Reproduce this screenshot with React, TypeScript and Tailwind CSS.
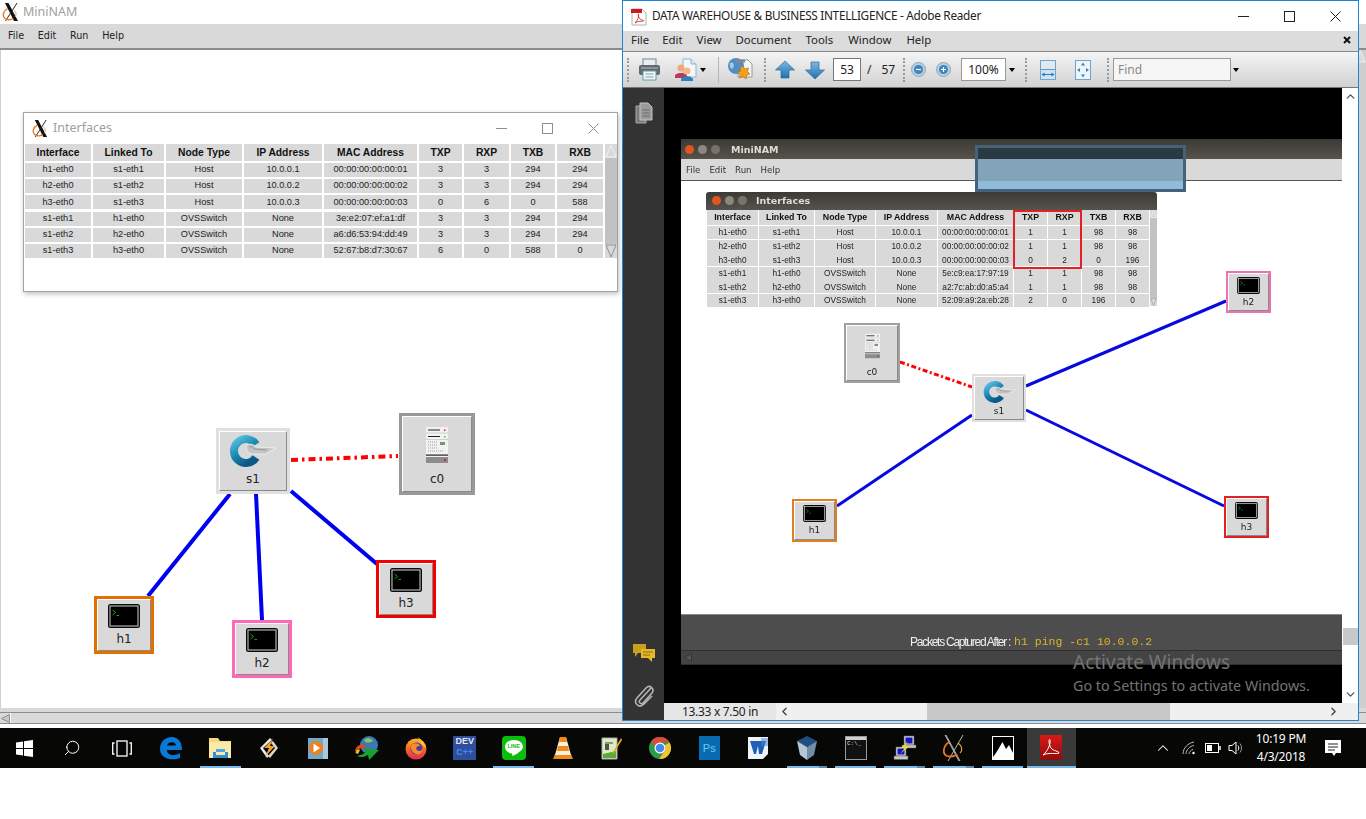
import type { ReactNode } from "react";
import { ChevronDown, ChevronLeft, ChevronRight, ChevronUp, Search } from "lucide-react";

const SANS = "font-['Liberation_Sans',Arial,sans-serif]";
const UI = "font-['Noto_Sans',sans-serif]";
const DEJAVU = "font-['DejaVu_Sans',sans-serif]";

const headers = ["Interface", "Linked To", "Node Type", "IP Address", "MAC Address", "TXP", "RXP", "TXB", "RXB"];

const liveRows = [
  ["h1-eth0", "s1-eth1", "Host", "10.0.0.1", "00:00:00:00:00:01", "3", "3", "294", "294"],
  ["h2-eth0", "s1-eth2", "Host", "10.0.0.2", "00:00:00:00:00:02", "3", "3", "294", "294"],
  ["h3-eth0", "s1-eth3", "Host", "10.0.0.3", "00:00:00:00:00:03", "0", "6", "0", "588"],
  ["s1-eth1", "h1-eth0", "OVSSwitch", "None", "3e:e2:07:ef:a1:df", "3", "3", "294", "294"],
  ["s1-eth2", "h2-eth0", "OVSSwitch", "None", "a6:d6:53:94:dd:49", "3", "3", "294", "294"],
  ["s1-eth3", "h3-eth0", "OVSSwitch", "None", "52:67:b8:d7:30:67", "6", "0", "588", "0"],
];

const docRows = [
  ["h1-eth0", "s1-eth1", "Host", "10.0.0.1", "00:00:00:00:00:01", "1", "1", "98", "98"],
  ["h2-eth0", "s1-eth2", "Host", "10.0.0.2", "00:00:00:00:00:02", "1", "1", "98", "98"],
  ["h3-eth0", "s1-eth3", "Host", "10.0.0.3", "00:00:00:00:00:03", "0", "2", "0", "196"],
  ["s1-eth1", "h1-eth0", "OVSSwitch", "None", "5e:c9:ea:17:97:19", "1", "1", "98", "98"],
  ["s1-eth2", "h2-eth0", "OVSSwitch", "None", "a2:7c:ab:d0:a5:a4", "1", "1", "98", "98"],
  ["s1-eth3", "h3-eth0", "OVSSwitch", "None", "52:09:a9:2a:eb:28", "2", "0", "196", "0"],
];

function XLogo({ className }: { className?: string }) {
  return (
    <svg viewBox="0 0 18 20" className={className}>
      <path d="M3 1 L6.5 1 L16 19 L12 19 Z" fill="#111" />
      <path d="M14.5 1 L15.5 1 L4 19 L3 19 Z" fill="#222" />
      <path d="M5.5 6.5 C1 9 0 14 3 16.5 C6 18.5 10 18 11 16" fill="none" stroke="#e8761e" strokeWidth="1.4" />
      <path d="M12 8 C14.5 10 14.5 13 13 15" fill="none" stroke="#e8a060" strokeWidth="1" />
    </svg>
  );
}

function WinControls({ inactive }: { inactive?: boolean }) {
  const stroke = inactive ? "#8f8f8f" : "#222";
  return (
    <div className="flex items-center">
      <svg width="11" height="11" viewBox="0 0 11 11" className="mr-[35px]"><path d="M0 5.5H11" stroke={stroke} /></svg>
      <svg width="11" height="11" viewBox="0 0 11 11" className="mr-[35px]"><rect x="0.5" y="0.5" width="10" height="10" fill="none" stroke={stroke} /></svg>
      <svg width="11" height="11" viewBox="0 0 11 11"><path d="M0.5 0.5L10.5 10.5M10.5 0.5L0.5 10.5" stroke={stroke} /></svg>
    </div>
  );
}

function Terminal({ className }: { className?: string }) {
  return (
    <svg viewBox="0 0 32 24" className={className}>
      <rect width="32" height="24" rx="2.5" fill="#0a0a0a" />
      <rect x="2" y="2" width="28" height="20" fill="#000" stroke="#e8e8e8" strokeWidth="0.9" />
      <path d="M4.5 6 L7.5 8.5 L4.5 11 M8.5 11.5 H11" fill="none" stroke="#0fbf0f" strokeWidth="0.9" />
    </svg>
  );
}

function SwitchIcon({ className }: { className?: string }) {
  return (
    <svg viewBox="0 0 48 34" className={className}>
      <defs>
        <linearGradient id="ring" x1="0" y1="0" x2="0.6" y2="1">
          <stop offset="0" stopColor="#5cc0e0" />
          <stop offset="0.55" stopColor="#1a86b4" />
          <stop offset="1" stopColor="#0b5a86" />
        </linearGradient>
      </defs>
      <path d="M27 10.500 A12 12 0 1 0 27 23.500" fill="none" stroke="url(#ring)" strokeWidth="8" />
      <path d="M17 12 C20 9 25 10 27 13 L47 14 L36 20 L24 20 C20 20 17 16 17 12Z" fill="#c4c4c4" stroke="#f4f4f4" strokeWidth="0.8" />
      <path d="M20 13 C22 12 24 13 25 15 L38 16" fill="none" stroke="#8d8d8d" strokeWidth="0.8" />
    </svg>
  );
}

function ServerIcon({ className }: { className?: string }) {
  return (
    <svg viewBox="0 0 22 36" className={className}>
      <rect width="22" height="36" fill="#f2f2f2" />
      <path d="M2 3H14M2 9.500H14" stroke="#222" strokeWidth="1.2" />
      <rect x="18" y="2.500" width="1.500" height="1.500" fill="#d22" />
      <rect x="18" y="9" width="1.500" height="1.500" fill="#5b5" />
      <path d="M0 6H22M0 12.500H22" stroke="#bbb" strokeWidth="0.6" />
      <path d="M2 15H11M2 18H11M2 21H11M2 24H18" stroke="#9a9a9a" strokeWidth="1" strokeDasharray="1 1" />
      <rect x="14" y="15" width="5" height="3" fill="#6f9a6f" />
      <rect y="27.500" width="22" height="1.200" fill="#222" />
      <rect y="30" width="22" height="6" fill="#8c8c8c" />
      <rect x="18" y="32" width="2" height="2" fill="#b33" />
    </svg>
  );
}

function NetNode({ className, label, labelClass, children }: { className: string; label: string; labelClass: string; children: ReactNode }) {
  return (
    <div className={`absolute flex border-solid ${className}`}>
      <div className="flex flex-1 flex-col items-center border border-t-white border-l-white border-r-[#8a8a8a] border-b-[#8a8a8a] bg-[#d9d9d9]">
        {children}
        <span className={`${DEJAVU} text-[#222] ${labelClass}`}>{label}</span>
      </div>
    </div>
  );
}

function InterfaceGrid({ rows, grid, head, cell, headCell, rowCell }: { rows: string[][]; grid: string; head: string; cell: string; headCell: string; rowCell: string }) {
  return (
    <div className={`grid ${grid} ${SANS}`}>
      {headers.map((h) => (
        <div key={h} className={`flex items-center justify-center bg-[#d9d9d9] font-bold text-[#111] ${headCell} ${head}`}>
          {h}
        </div>
      ))}
      {rows.map((row) =>
        row.map((v, i) => (
          <div key={row[0] + i} className={`flex items-center justify-center bg-[#d9d9d9] text-[#222] ${rowCell} ${cell}`}>
            {v}
          </div>
        ))
      )}
    </div>
  );
}

function TableScroll({ className }: { className: string }) {
  return (
    <div className={`flex flex-col justify-between bg-[#c2c2c2] ${className}`}>
      <svg viewBox="0 0 12 14" className="w-full">
        <rect width="12" height="14" fill="#d9d9d9" />
        <path d="M6 1 L11 13 H1 Z" fill="#d9d9d9" stroke="#f2f2f2" />
      </svg>
      <svg viewBox="0 0 12 14" className="w-full">
        <rect width="12" height="14" fill="#d9d9d9" />
        <path d="M6 13 L11 1 H1 Z" fill="#d9d9d9" stroke="#8f8f8f" />
      </svg>
    </div>
  );
}

function MiniNamWindow() {
  return (
    <div className="absolute left-0 top-0 flex h-[728px] w-[1366px] flex-col bg-white">
      <div className="flex h-6 items-center pl-[2px]">
        <XLogo className="h-[20px] w-[18px]" />
        <span className={`ml-[3px] text-[12.5px] text-[#a0a0a0] ${UI}`}>MiniNAM</span>
      </div>
      <div className={`flex h-[26px] items-center gap-[13.7px] border-b-2 border-[#8c8c8c] bg-[#d9d9d9] pl-2 text-[9.6px] text-[#222] ${DEJAVU}`}>
        <span>File</span>
        <span>Edit</span>
        <span>Run</span>
        <span>Help</span>
      </div>
      <div className="flex flex-1">
        <div className="relative flex-1 border-l border-[#d0d0d0]">
          <svg className="absolute left-0 top-0" width="500" height="658" viewBox="0 50 500 658">
            <g stroke="#0000f0" strokeWidth="4">
              <path d="M229 494 L147 596" />
              <path d="M255 494 L261 620" />
              <path d="M290 491 L376 564" />
            </g>
            <path d="M290 460 L397 456" stroke="#f00" strokeWidth="4" strokeDasharray="7 4 2.500 4" fill="none" />
          </svg>

          <div className="absolute left-[22px] top-[62px] flex h-[180px] w-[595px] flex-col border border-[#a3a3a3] bg-white shadow-[1px_2px_5px_rgba(0,0,0,0.25)]">
            <div className="flex h-[30px] items-center pl-2 pr-[18px]">
              <XLogo className="h-[19px] w-[17px]" />
              <span className={`ml-[4px] mt-px text-[12.5px] text-[#a0a0a0] ${UI}`}>Interfaces</span>
              <div className="ml-auto">
                <WinControls inactive />
              </div>
            </div>
            <div className="ml-px mt-px flex">
              <InterfaceGrid
                rows={liveRows}
                grid="grid-cols-[66px_71px_76px_78px_93px_43px_45px_44px_46px] gap-[2px]"
                head="h-[17px]"
                cell="h-[14px]"
                headCell="text-[10.3px]"
                rowCell="text-[9.2px]"
              />
              <TableScroll className="ml-[2px] h-[114px] w-[12px]" />
            </div>
          </div>

          <NetNode className="left-[215px] top-[378px] h-[66px] w-[74px] border-[3px] border-[#e0e0e0]" label="s1" labelClass="text-[12px] leading-none mt-[5px]">
            <SwitchIcon className="mt-[2px] h-[34px] w-[48px]" />
          </NetNode>
          <NetNode className="left-[398px] top-[363px] h-[82px] w-[76px] border-[3px] border-[#999999]" label="c0" labelClass="text-[12px] leading-none mt-[10px]">
            <ServerIcon className="mt-[10px] h-[36px] w-[22px]" />
          </NetNode>
          <NetNode className="left-[93px] top-[546px] h-[58px] w-[60px] border-[3px] border-[#e07000]" label="h1" labelClass="text-[12px] leading-none mt-[5px]">
            <Terminal className="mt-[4px] h-[24px] w-[32px]" />
          </NetNode>
          <NetNode className="left-[231px] top-[570px] h-[58px] w-[60px] border-[3px] border-[#ff69b4]" label="h2" labelClass="text-[12px] leading-none mt-[5px]">
            <Terminal className="mt-[4px] h-[24px] w-[32px]" />
          </NetNode>
          <NetNode className="left-[375px] top-[510px] h-[58px] w-[60px] border-[3px] border-[#f40000]" label="h3" labelClass="text-[12px] leading-none mt-[5px]">
            <Terminal className="mt-[4px] h-[24px] w-[32px]" />
          </NetNode>
        </div>
        <div className="flex w-[12px] flex-col border-l border-[#aaa] bg-[#cfcfcf]">
          <svg viewBox="0 0 12 14" className="w-full">
            <path d="M6 1 L11 13 H1 Z" fill="#d9d9d9" stroke="#f2f2f2" />
          </svg>
        </div>
      </div>
      <div className="h-1 bg-[#d9d9d9]" />
      <div className="flex h-3 border-y border-[#8c8c8c] bg-[#d9d9d9]">
        <div className="flex w-[11px] items-center justify-center border-r border-white">
          <svg width="9" height="9" viewBox="0 0 9 9"><path d="M0.5 4.5 L8.500 0.500 V8.500 Z" fill="#c8c8c8" stroke="#8f8f8f" /></svg>
        </div>
      </div>
      <div className="h-1" />
    </div>
  );
}

function Grip() {
  return <div className="h-[24px] w-[2px] border-l-2 border-dotted border-[#999]" />;
}

function Caret() {
  return <div className="h-0 w-0 border-x-[3px] border-t-[4px] border-x-transparent border-t-black" />;
}

function PrinterIcon() {
  return (
    <svg viewBox="0 0 23 23" className="ml-[9px] h-[23px] w-[23px]">
      <rect x="5" y="1" width="13" height="7" fill="#e8eef2" stroke="#6d8c9c" />
      <rect x="1" y="7" width="21" height="10" rx="2" fill="#62696f" />
      <rect x="3" y="9" width="17" height="2" fill="#8d9499" />
      <rect x="5" y="13" width="13" height="9" fill="#f3f6f7" stroke="#58a0b0" />
      <path d="M7.500 16H15.500M7.500 19H15.500" stroke="#8f9aa0" />
    </svg>
  );
}

function ShareIcon() {
  return (
    <svg viewBox="0 0 23 24" className="ml-[13px] h-[24px] w-[23px]">
      <path d="M9 1H17L22 6V19H9Z" fill="#f4f8fb" stroke="#8fb4cc" />
      <path d="M17 1V6H22" fill="#dce8f0" stroke="#8fb4cc" />
      <circle cx="7" cy="10" r="3.500" fill="#f0a878" />
      <path d="M1 18C1 14 13 14 13 18V20H1Z" fill="#b83a5a" />
      <circle cx="13" cy="13" r="3.500" fill="#f4b888" />
      <path d="M7 22C7 17 19 17 19 22V23H7Z" fill="#2f80b8" />
    </svg>
  );
}

function GlobeIcon() {
  return (
    <svg viewBox="0 0 26 26" className="ml-[8px] h-[26px] w-[26px]">
      <path d="M11 3H21L25 7V20H11Z" fill="#f5f5f5" stroke="#9a9a9a" />
      <circle cx="9" cy="9" r="8" fill="#4f8fc4" />
      <path d="M3 6C6 4 8 8 6 11C4 13 2 10 3 6Z" fill="#a9cbe4" />
      <rect x="8" y="2.500" width="10" height="3" fill="#888" />
      <path d="M16 9L18 12L21.500 11L20.500 14.500L23 17L20 18L19 22L16 19.500L12.500 21L13 17.500L10 15.500L13.500 14L13 10.500Z" fill="#f0a020" stroke="#a86a10" strokeWidth="0.6" />
    </svg>
  );
}

function ArrowIcon({ down, className }: { down?: boolean; className: string }) {
  return (
    <svg viewBox="0 0 20 20" className={className}>
      <defs>
        <linearGradient id="arrowBlue" x1="0" y1="0" x2="0" y2="1">
          <stop offset="0" stopColor="#7cb8e4" />
          <stop offset="1" stopColor="#1f70b0" />
        </linearGradient>
      </defs>
      <path
        d={down ? "M6 2H14V10H19.500L10 19L0.500 10H6Z" : "M10 1L19.500 10H14V18H6V10H0.500Z"}
        fill="url(#arrowBlue)"
        stroke="#2a6a9c"
        strokeWidth="0.7"
      />
    </svg>
  );
}

function ZoomIcon({ plus, className }: { plus?: boolean; className: string }) {
  return (
    <svg viewBox="0 0 15 15" className={className}>
      <circle cx="7.500" cy="7.500" r="7" fill="#b8cfe0" stroke="#8aa8c0" />
      <circle cx="7.500" cy="7.500" r="4.500" fill="#3f86bd" />
      <path d={plus ? "M5 7.500H10M7.500 5V10" : "M5 7.500H10"} stroke="#fff" strokeWidth="1.200" />
    </svg>
  );
}

function FitIcon({ page, className }: { page?: boolean; className: string }) {
  return (
    <svg viewBox="0 0 16 20" className={className}>
      <rect x="0.500" y="0.500" width="15" height="19" fill={page ? "#eef5fa" : "#e2e8ee"} stroke="#6aa4d0" />
      {page ? (
        <path d="M8 2.500L6 5.500H10ZM8 17.500L6 14.500H10ZM2 10L5 8V12ZM14 10L11 8V12Z" fill="#3a85bd" />
      ) : (
        <>
          <rect x="1" y="10" width="14" height="9" fill="#cfe2f0" />
          <path d="M1 9.500H15" stroke="#5d9ac8" />
          <path d="M1.500 14.500L4.500 12.500V16.500ZM14.500 14.500L11.500 12.500V16.500Z" fill="#2f78b0" />
          <path d="M4 14.500H12" stroke="#2f78b0" />
        </>
      )}
    </svg>
  );
}

function Toolbar() {
  return (
    <div className={`flex h-9 items-center border-b border-[#777] bg-linear-to-b from-[#f4f4f4] to-[#d2d2d2] ${UI}`}>
      <div className="ml-[4px]"><Grip /></div>
      <PrinterIcon />
      <ShareIcon />
      <div className="ml-[3px] w-[6px]"><Caret /></div>
      <div className="ml-[12px] h-[26px] w-px bg-[#b5b5b5]" />
      <GlobeIcon />
      <div className="ml-[11px]"><Grip /></div>
      <ArrowIcon className="ml-[9px] h-[20px] w-[20px]" />
      <ArrowIcon down className="ml-[10px] h-[20px] w-[20px]" />
      <div className="ml-[8px] flex h-[23px] w-[28px] items-center justify-center border border-[#777] bg-white text-[12px] text-[#222]">53</div>
      <div className="ml-[6px] flex w-[30px] gap-[10px] text-[12px] text-[#222]">
        <span>/</span>
        <span>57</span>
      </div>
      <div className="ml-[6px]"><Grip /></div>
      <ZoomIcon className="ml-[6px] h-[15px] w-[15px]" />
      <ZoomIcon plus className="ml-[10px] h-[15px] w-[15px]" />
      <div className="ml-[10px] flex h-[23px] w-[45px] items-center justify-center border border-[#999] bg-white text-[12px] text-[#222]">100%</div>
      <div className="ml-[3px] w-[6px]"><Caret /></div>
      <div className="ml-[10px]"><Grip /></div>
      <FitIcon className="ml-[13px] h-[20px] w-[16px]" />
      <FitIcon page className="ml-[19px] h-[20px] w-[16px]" />
      <div className="ml-[16px]"><Grip /></div>
      <div className="ml-[4px] flex h-[23px] w-[118px] items-center border border-[#999] bg-[#f6f6f6] pl-[4px] text-[12px] text-[#888]">Find</div>
      <div className="ml-[2px] w-[6px]"><Caret /></div>
    </div>
  );
}

function DocPage() {
  return (
    <div className="flex h-[526px] w-[661px] flex-col bg-white blur-[0.4px]">
      <div className="flex h-5 items-center bg-linear-to-b from-[#3b3a36] to-[#57534b] pl-[4px]">
        <span className="h-[9px] w-[9px] rounded-full bg-[#e0561f]" />
        <span className="ml-[4px] h-[9px] w-[9px] rounded-full bg-[#8c887e]" />
        <span className="ml-[4px] h-[9px] w-[9px] rounded-full bg-[#77736a]" />
        <span className={`ml-[11px] mt-[3px] text-[9.5px] font-bold text-[#dfdbd2] ${DEJAVU}`}>MiniNAM</span>
      </div>
      <div className={`flex h-[22px] items-center gap-[9px] border-b border-[#555] bg-[#d9d9d9] pl-[5px] pt-px text-[8.6px] text-[#333] ${DEJAVU}`}>
        <span>File</span>
        <span>Edit</span>
        <span>Run</span>
        <span>Help</span>
      </div>
      <div className="relative h-[433px]">
        <svg className="absolute left-0 top-0" width="661" height="433" viewBox="0 0 661 433">
          <g stroke="#0808e0" strokeWidth="3">
            <path d="M345 205 L545 120" />
            <path d="M345 229 L543 325" />
            <path d="M291 234 L156 325" />
          </g>
          <path d="M219 181 L291 206" stroke="#f00" strokeWidth="3" strokeDasharray="5 2.500 2 2.500" fill="none" />
        </svg>

        <div className="absolute left-[25px] top-[11px] flex h-[115px] w-[451px] flex-col">
          <div className="flex h-[20px] items-center rounded-t-[3px] bg-linear-to-b from-[#3b3a36] to-[#57534b] pl-[6px]">
            <span className="h-[9px] w-[9px] rounded-full bg-[#e0561f]" />
            <span className="ml-[4px] h-[9px] w-[9px] rounded-full bg-[#8c887e]" />
            <span className="ml-[4px] h-[9px] w-[9px] rounded-full bg-[#77736a]" />
            <span className={`ml-[9px] text-[9.5px] font-bold text-[#dfdbd2] ${DEJAVU}`}>Interfaces</span>
          </div>
          <div className="ml-px flex pt-[0.5px]">
            <InterfaceGrid
              rows={docRows}
              grid="grid-cols-[51px_55px_60px_61px_75px_33px_33px_33px_33px] gap-x-px gap-y-[0.6px]"
              head="h-[15px]"
              cell="h-[13px]"
              headCell="text-[8.8px]"
              rowCell="text-[8.3px]"
            />
            <TableScroll className="ml-px h-[96px] w-[8px]" />
          </div>
          <div className="absolute left-[307px] top-[18px] h-[59px] w-[69px] border-2 border-[#e41f26]" />
        </div>

        <NetNode className="left-[163px] top-[142px] h-[60px] w-[56px] border-2 border-[#a0a0a0]" label="c0" labelClass="text-[9px] leading-none mt-[9px]">
          <ServerIcon className="mt-[7px] h-[26px] w-[15px]" />
        </NetNode>
        <NetNode className="left-[291px] top-[193px] h-[48px] w-[54px] border-2 border-[#e0e0e0]" label="s1" labelClass="text-[9px] leading-none mt-[3px]">
          <SwitchIcon className="mt-[3px] h-[24px] w-[33px]" />
        </NetNode>
        <NetNode className="left-[545px] top-[90px] h-[42px] w-[45px] border-2 border-[#f070b4]" label="h2" labelClass="text-[9px] leading-none mt-[4px]">
          <Terminal className="mt-[3px] h-[17px] w-[23px]" />
        </NetNode>
        <NetNode className="left-[111px] top-[318px] h-[43px] w-[45px] border-2 border-[#e08020]" label="h1" labelClass="text-[9px] leading-none mt-[4px]">
          <Terminal className="mt-[3px] h-[17px] w-[23px]" />
        </NetNode>
        <NetNode className="left-[543px] top-[315px] h-[42px] w-[45px] border-2 border-[#e41f26]" label="h3" labelClass="text-[9px] leading-none mt-[4px]">
          <Terminal className="mt-[3px] h-[17px] w-[23px]" />
        </NetNode>
      </div>
      <div className="flex h-9 items-start border-t border-[#888] bg-[#4d4d4d] pl-[229px] pt-[19px]">
        <span className={`text-[12px] leading-4 tracking-[-1.25px] text-[#f0f0f0] ${SANS}`}>Packets Captured After :</span>
        <span className="ml-[4px] font-['Liberation_Mono',monospace] text-[11.5px] leading-4 text-[#dcb42c]">h1 ping -c1 10.0.0.2</span>
      </div>
      <div className="flex h-[15px] items-center border-y border-[#303030] bg-[#444] pl-[3px]">
        <svg width="8" height="9" viewBox="0 0 8 9"><path d="M0.500 4.500L7.500 0.500V8.500Z" fill="#555" stroke="#333" /></svg>
      </div>
    </div>
  );
}

function AdobeWindow() {
  return (
    <div className="absolute left-[622px] top-0 flex h-[721px] w-[737px] flex-col border border-[#1a86d8] bg-white">
      <div className="flex h-[30px] items-center pl-[8px] pr-[17px]">
        <svg viewBox="0 0 16 20" className="h-[20px] w-[16px]">
          <path d="M1 3H11L15 7V19H1Z" fill="#fff" stroke="#b0b0b0" />
          <rect x="0" y="3" width="11" height="4" fill="#d01818" />
          <path d="M4 17C7 14 8 10 7.500 8C7 7 7 11 9 13C11 14.500 13 14 12.500 15C11 15.500 7 14.500 4 17Z" fill="none" stroke="#d01818" strokeWidth="0.8" />
        </svg>
        <span className={`ml-[5px] text-[11.8px] tracking-[-0.3px] text-[#222] ${UI}`}>DATA WAREHOUSE &amp; BUSINESS INTELLIGENCE - Adobe Reader</span>
        <div className="ml-auto">
          <WinControls />
        </div>
      </div>
      <div className={`relative flex h-[21px] items-center border-b border-[#888] bg-[#dcdcdc] pb-[2px] pl-[8px] text-[11.4px] text-[#222] ${UI}`}>
        <span>File</span>
        <span className="ml-[13px]">Edit</span>
        <span className="ml-[14px]">View</span>
        <span className="ml-[14px]">Document</span>
        <span className="ml-[14px]">Tools</span>
        <span className="ml-[15px]">Window</span>
        <span className="ml-[15px]">Help</span>
        <svg width="8" height="8" viewBox="0 0 8 8" className="ml-auto mr-[7px]"><path d="M1 1L7 7M7 1L1 7" stroke="#111" strokeWidth="2" /></svg>
      </div>
      <Toolbar />
      <div className="flex min-h-0 flex-1">
        <div className="flex w-[41px] flex-col items-center bg-[#333] pt-[14px]">
          <svg viewBox="0 0 18 22" className="h-[22px] w-[18px]">
            <path d="M1 4H11V21H1Z" fill="#7b7b7b" stroke="#aaa" />
            <path d="M5 1H13L17 5V18H5Z" fill="#9a9a9a" stroke="#c4c4c4" />
            <path d="M7.500 8H14.500M7.500 11H14.500M7.500 14H14.500" stroke="#6a6a6a" />
          </svg>
          <svg viewBox="0 0 24 20" className="mt-auto h-[20px] w-[24px]">
            <path d="M1 1H14V10H6L3 14V10H1Z" fill="#c8a020" />
            <path d="M9 6H23V15H20V19L16 15H9Z" fill="#e6b82c" />
            <path d="M11 9H21M11 12H18" stroke="#8a6a10" />
          </svg>
          <svg viewBox="0 0 22 24" fill="none" className="mb-[12px] mt-[21px] h-[24px] w-[22px]">
            <path d="M18 4L7 16C5 18 8 21 10 19L19 9C22 5 17 0 13 4L4 14C0 19 6 25 11 20L19 12" stroke="#b5b5b5" strokeWidth="1.600" />
          </svg>
        </div>
        <div className="flex min-w-0 flex-1 flex-col">
          <div className="flex min-h-0 flex-1">
            <div className="flex-1 overflow-hidden bg-black pl-[17px] pt-[51px]">
              <DocPage />
            </div>
            <div className="flex w-4 flex-col items-center bg-white text-[#555]">
              <ChevronUp size={13} strokeWidth={2.5} className="mt-[2px]" />
              <div className="mt-auto h-[17px] w-[15px] bg-[#c8c8c8]" />
              <ChevronDown size={13} strokeWidth={2.5} className="mb-[2px] mt-[43px]" />
            </div>
          </div>
          <div className="flex h-[17px] items-center bg-[#f0f0f0] text-[#444]">
            <div className={`flex h-full w-[112px] items-center justify-center bg-[#e6e6e6] text-[12px] tracking-[-0.3px] text-[#222] ${UI}`}>13.33 x 7.50 in</div>
            <ChevronLeft size={13} strokeWidth={2.5} className="ml-[2px]" />
            <div className="ml-[136px] h-full w-[243px] bg-[#c8c8c8]" />
            <ChevronRight size={13} strokeWidth={2.5} className="ml-auto mr-[18px]" />
          </div>
        </div>
      </div>
      {/* translucent selection box left over the slide */}
      <div className="absolute left-[352px] top-[144px] flex h-[47px] w-[211px] flex-col border-[3px] border-[#46627a]">
        <div className="h-[11px] bg-[#2a3a42]" />
        <div className="h-[22px] bg-[#82a3b8]" />
        <div className="flex-1 bg-[#8fbcd8]" />
      </div>
    </div>
  );
}

function EdgeIcon() {
  return (
    <svg viewBox="0 0 24 24" className="h-[24px] w-[24px]">
      <path
        fillRule="evenodd"
        d="M1 13C1 5 7 1 13 1C19 1 23 6 23 14H8C8 19 15 21 21 17V22C13 25 1 23 1 13ZM8 9.500H17C17 5 9 5 8 9.500Z"
        fill="#0a78d6"
      />
    </svg>
  );
}

function FolderIcon() {
  return (
    <svg viewBox="0 0 24 24" className="h-[24px] w-[24px]">
      <path d="M1 2H10L12 5H23V22H1Z" fill="#f6d978" />
      <rect x="1" y="6" width="22" height="16" fill="#fbe9a8" />
      <rect x="8" y="13" width="9" height="3" fill="#4aa8e8" />
      <path d="M5 22V16H8V19H17V16H20V22Z" fill="#2f8fd8" />
    </svg>
  );
}

function WinampIcon() {
  return (
    <svg viewBox="0 0 24 24" className="h-[24px] w-[24px]">
      <path d="M3 12L13 2L15 4L6 12L12 20L10 22Z" fill="#e8e8e8" />
      <path d="M21 12L13 22L11 20L18 12L14 7L16 5Z" fill="#d8d8d8" />
      <path d="M16 3L7 12H12L8 21L18 10H13Z" fill="#f2a028" />
    </svg>
  );
}

function MediaIcon() {
  return (
    <svg viewBox="0 0 22 24" className="h-[24px] w-[22px]">
      <rect x="1" y="2" width="20" height="21" fill="#72a8c8" />
      <rect x="16" y="2" width="5" height="21" fill="#a8c8dc" />
      <circle cx="9" cy="12" r="7" fill="#ee7f1e" />
      <path d="M6.500 7.500L13 12L6.500 16.500Z" fill="#fff" />
    </svg>
  );
}

function IdmIcon() {
  return (
    <svg viewBox="0 0 26 26" className="h-[26px] w-[26px]">
      <circle cx="15" cy="10" r="9" fill="#3a78b8" />
      <path d="M10 5C13 2 18 3 19 6C16 8 12 9 10 5Z" fill="#8cc060" />
      <path d="M1 16C2 10 8 8 12 11L10 14C8 12 5 13 4 17Z" fill="#d8481c" />
      <path d="M1.500 18C2 15 4 14 6 15L4 19Z" fill="#e8c820" />
      <path d="M3 21C8 20 11 18 12 16L10 13L25 15L15 25L14 20C11 22 6 23 3 21Z" fill="#18a030" />
    </svg>
  );
}

function FirefoxIcon() {
  return (
    <svg viewBox="0 0 24 24" className="h-[24px] w-[24px]">
      <defs>
        <linearGradient id="fox" x1="0.5" y1="0" x2="0.5" y2="1">
          <stop offset="0" stopColor="#ffb520" />
          <stop offset="0.6" stopColor="#f25a2a" />
          <stop offset="1" stopColor="#e02a5a" />
        </linearGradient>
      </defs>
      <circle cx="12" cy="13" r="10.500" fill="url(#fox)" />
      <path d="M14 1C17 4 21 6 22 12L17 8Z" fill="#ffc820" />
      <circle cx="12.500" cy="12.500" r="6" fill="#4a3aa8" />
      <path d="M8 8C12 6 16 8 16 10C13 10 11 12 13 14C15 16 18 15 19 12C19 18 13 20 10 17C7 15 6 11 8 8Z" fill="#f78a2a" />
    </svg>
  );
}

function DevCppIcon() {
  return (
    <div className={`flex h-[24px] w-[23px] flex-col items-center bg-[#2f4e9c] text-[9px] font-bold leading-[10.5px] ${SANS}`}>
      <span className="text-[#e6e6f0]">DEV</span>
      <span className="text-[#3f8cff]">C++</span>
    </div>
  );
}

function LineIcon() {
  return (
    <div className="relative flex h-[24px] w-[24px] items-center justify-center rounded-[4px] bg-[#0cbe0c]">
      <svg viewBox="0 0 20 18" className="absolute h-[18px] w-[20px]">
        <path d="M10 1C4.500 1 1 4 1 8C1 11.500 4 14 8 14.500L8.500 17C11 16 18 12.500 19 8C19 4 15.500 1 10 1Z" fill="#fff" />
      </svg>
      <span className={`relative -mt-[3px] text-[5.5px] font-bold text-[#0cbe0c] ${SANS}`}>LINE</span>
    </div>
  );
}

function VlcIcon() {
  return (
    <svg viewBox="0 0 22 24" className="h-[24px] w-[22px]">
      <path d="M1 23L3 18H19L21 23Z" fill="#f08a10" />
      <path d="M8 1H14L19 19H3Z" fill="#f6f0e4" />
      <path d="M8 1H14L15 6H7ZM6 10H16L17 15H5Z" fill="#f08a10" />
    </svg>
  );
}

function NotesIcon() {
  return (
    <svg viewBox="0 0 24 24" className="h-[24px] w-[24px]">
      <path d="M3 2H18V23H3Z" fill="#dcecc0" stroke="#aaa" />
      <path d="M4 18L17 15V22H4Z" fill="#5aa838" />
      <path d="M6 7H14" stroke="#444" />
      <path d="M7 8V14M9 8V14" stroke="#222" strokeWidth="1.500" />
      <path d="M22 2L14 16L13 18L15 17L23 4Z" fill="#e8a820" />
    </svg>
  );
}

function ChromeIcon() {
  return (
    <svg viewBox="0 0 24 24" className="h-[24px] w-[24px]">
      <circle cx="12" cy="12" r="11" fill="#2d9a4a" />
      <path d="M12 1A11 11 0 0 1 21.500 6.500H12A5.500 5.500 0 0 0 7.200 9.300L2.700 6A11 11 0 0 1 12 1Z" fill="#dd4a3a" />
      <path d="M21.500 6.500A11 11 0 0 1 11 23L16.700 14.700A5.500 5.500 0 0 0 16.800 9.300Z" fill="#f6c330" />
      <circle cx="12" cy="12" r="5.500" fill="#fff" />
      <circle cx="12" cy="12" r="4.300" fill="#4a86e8" />
    </svg>
  );
}

function PsIcon() {
  return (
    <div className={`flex h-[24px] w-[21px] items-center justify-center bg-[#0a6cb0] text-[11px] text-[#68c8f8] ${SANS}`}>Ps</div>
  );
}

function WordIcon() {
  return (
    <svg viewBox="0 0 22 24" className="h-[24px] w-[22px]">
      <path d="M1 1H21V18L16 23H1Z" fill="#eef4fb" />
      <path d="M3 5H19L15 18H12L11 10L9 18H7Z" fill="#1f5fb8" />
      <path d="M14 2H21V10H14Z" fill="#3f80d0" opacity="0.500" />
    </svg>
  );
}

function VboxIcon() {
  return (
    <svg viewBox="0 0 22 26" className="h-[26px] w-[22px]">
      <path d="M11 1L21 6L11 12L1 6Z" fill="#1f4f80" />
      <path d="M1 6L11 12V25L4 20Z" fill="#b8c4d0" />
      <path d="M21 6L11 12V25L18 20Z" fill="#6f8ca8" />
    </svg>
  );
}

function CmdIcon() {
  return (
    <div className="flex h-[24px] w-[22px] flex-col border border-[#9a9a9a] bg-[#111]">
      <span className="h-[3px] bg-[#cfcfcf]" />
      <span className="pl-px pt-px font-['Liberation_Mono',monospace] text-[6px] leading-none text-[#ddd]">C:\_</span>
    </div>
  );
}

function PuttyIcon() {
  return (
    <svg viewBox="0 0 24 26" className="h-[26px] w-[24px]">
      <rect x="11" y="1" width="10" height="9" fill="#d8d8d8" stroke="#555" strokeWidth="0.600" />
      <rect x="12.500" y="2.500" width="7" height="6" fill="#1414c0" />
      <rect x="9" y="10" width="14" height="3" fill="#c8c8c8" stroke="#555" strokeWidth="0.500" />
      <rect x="3" y="12" width="10" height="9" fill="#d8d8d8" stroke="#555" strokeWidth="0.600" />
      <rect x="4.500" y="13.500" width="7" height="6" fill="#1414c0" />
      <rect x="1" y="21" width="14" height="3.500" fill="#c8c8c8" stroke="#555" strokeWidth="0.500" />
      <path d="M15 6L8 13L12 13L7 19L16 11.500L12 11.500Z" fill="#f2e020" />
    </svg>
  );
}

function XmingIcon() {
  return (
    <svg viewBox="0 0 24 28" className="h-[28px] w-[24px]" fill="none">
      <path d="M3 1L17 27M4 1L18 27" stroke="#c8c8c8" strokeWidth="0.900" />
      <path d="M21 1L6 27" stroke="#b8b8b8" strokeWidth="1" />
      <path d="M7 8C1 12 0 20 5 22C9 23 13 22 15 20" stroke="#e8761e" strokeWidth="1.800" />
      <path d="M16 9C20 12 21 16 18 19" stroke="#e8a040" strokeWidth="1.200" />
    </svg>
  );
}

function PhotosIcon() {
  return (
    <svg viewBox="0 0 22 24" className="h-[24px] w-[22px]">
      <rect width="22" height="24" fill="#fff" />
      <path d="M1 1H21V17L17 9L14 13L10.500 6L4 17L1 21Z" fill="#000" />
    </svg>
  );
}

function AcrobatIcon() {
  return (
    <svg viewBox="0 0 22 26" className="h-[26px] w-[22px]">
      <defs>
        <linearGradient id="acro" x1="0" y1="0" x2="0" y2="1">
          <stop offset="0" stopColor="#d81818" />
          <stop offset="1" stopColor="#8f0c0c" />
        </linearGradient>
      </defs>
      <rect width="22" height="25" rx="1" fill="url(#acro)" />
      <path d="M3 20C8 16 11 8 10 5C9 3 8 8 11 13C13 16 19 16 19 18C17 19.500 9 17 3 20Z" fill="none" stroke="#fff" strokeWidth="1" />
    </svg>
  );
}

const taskItems: { key: string; icon: ReactNode; open?: boolean; stacked?: boolean; active?: boolean }[] = [
  { key: "edge", icon: <EdgeIcon /> },
  { key: "explorer", icon: <FolderIcon />, open: true },
  { key: "winamp", icon: <WinampIcon /> },
  { key: "media", icon: <MediaIcon /> },
  { key: "idm", icon: <IdmIcon /> },
  { key: "firefox", icon: <FirefoxIcon /> },
  { key: "dev", icon: <DevCppIcon /> },
  { key: "line", icon: <LineIcon />, open: true },
  { key: "vlc", icon: <VlcIcon /> },
  { key: "notes", icon: <NotesIcon /> },
  { key: "chrome", icon: <ChromeIcon /> },
  { key: "ps", icon: <PsIcon /> },
  { key: "word", icon: <WordIcon /> },
  { key: "vbox", icon: <VboxIcon />, open: true, stacked: true },
  { key: "cmd", icon: <CmdIcon />, open: true },
  { key: "putty", icon: <PuttyIcon />, open: true, stacked: true },
  { key: "xming", icon: <XmingIcon />, open: true, stacked: true },
  { key: "photos", icon: <PhotosIcon />, open: true },
  { key: "acrobat", icon: <AcrobatIcon />, open: true, active: true },
];

function Taskbar() {
  return (
    <div className={`flex h-10 items-center bg-[#070706] ${UI}`}>
      <div className="flex w-12 justify-center">
        <svg width="17" height="17" viewBox="0 0 17 17" fill="#fff">
          <path d="M0 2.400L7 1.400V8H0ZM8 1.200L17 0V8H8ZM0 9H7V15.600L0 14.600ZM8 9H17V17L8 15.800Z" />
        </svg>
      </div>
      <div className="flex w-12 justify-center text-white">
        <Search size={18} strokeWidth={1.3} className="-scale-x-100" />
      </div>
      <div className="flex w-[51px] justify-center">
        <svg width="20" height="17" viewBox="0 0 20 17" fill="none" stroke="#fff" strokeWidth="1.300">
          <rect x="5" y="1" width="10" height="15" />
          <path d="M2.500 3H0.700V14H2.500M17.500 3H19.300V14H17.500" />
        </svg>
      </div>
      {taskItems.map((item) => (
        <div
          key={item.key}
          className={`relative flex h-full w-[48.9px] items-center justify-center ${item.active ? "bg-[#3a3a3a]" : ""}`}
        >
          {item.icon}
          {item.open && (
            <div className={`absolute bottom-0 flex h-[2px] ${item.active ? "inset-x-0" : "inset-x-[4px]"} bg-[#76b9ed]`}>
              {item.stacked && <div className="ml-auto w-[8px] bg-[#5a8cb0]" />}
            </div>
          )}
        </div>
      ))}
      <div className="ml-auto flex items-center text-white">
        <ChevronUp size={18} strokeWidth={1.4} />
        <svg width="14" height="14" viewBox="0 0 14 14" fill="none" stroke="#bbb" className="ml-[10px]">
          <path d="M1 13C1 7 6 2 12 1M4 13C4 9 8 5 12 4.500M7 13C7 11 9 9 11 8.500" />
          <circle cx="11.500" cy="12" r="1.200" fill="#fff" stroke="none" />
        </svg>
        <svg width="16" height="10" viewBox="0 0 16 10" fill="none" stroke="#fff" className="ml-[9px]">
          <rect x="0.500" y="0.500" width="13" height="9" />
          <rect x="2" y="2" width="5" height="6" fill="#fff" stroke="none" />
          <path d="M15 3V7" strokeWidth="1.500" />
        </svg>
        <svg width="16" height="16" viewBox="0 0 16 16" fill="none" stroke="#fff" className="ml-[7px]">
          <path d="M1 5.500H4L8 2V14L4 10.500H1Z" />
          <path d="M10 5.500C11 7 11 9 10 10.500" />
          <path d="M12 3.500C14 6 14 10 12 12.500" stroke="#999" />
        </svg>
        <div className="ml-[13px] flex w-[48px] flex-col items-center whitespace-nowrap text-[12px] leading-[18px] tracking-[-0.2px]">
          <span>10:19 PM</span>
          <span>4/3/2018</span>
        </div>
        <svg width="16" height="17" viewBox="0 0 16 17" className="ml-[20px] mr-[25px]">
          <path d="M0 0H16V13H11L9 16L7 13H0Z" fill="#fff" />
          <path d="M3 4H13M3 7H13M3 10H10" stroke="#222" />
        </svg>
      </div>
    </div>
  );
}

export default function App() {
  return (
    <div className="relative h-[819px] w-[1366px] overflow-hidden bg-white">
      <div className="relative h-[728px]">
        <MiniNamWindow />
        <AdobeWindow />
        <div className={`pointer-events-none absolute left-[1073px] top-[650px] flex flex-col text-[#747474] ${UI}`}>
          <span className="text-[19px] leading-[25px]">Activate Windows</span>
          <span className="mt-[1px] text-[14.3px] leading-[20px]">Go to Settings to activate Windows.</span>
        </div>
      </div>
      <Taskbar />
    </div>
  );
}
